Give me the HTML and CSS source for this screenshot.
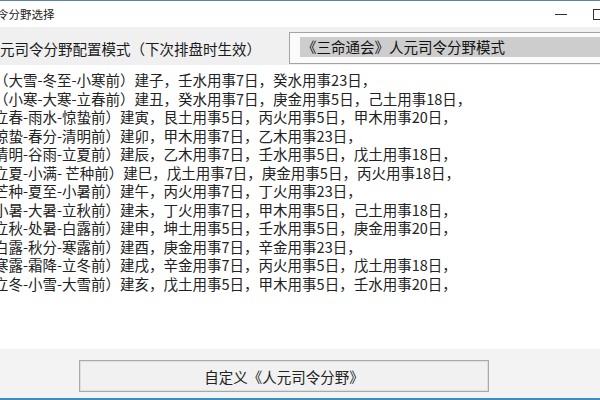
FILE: index.html
```html
<!DOCTYPE html>
<html lang="zh">
<head>
<meta charset="utf-8">
<title>人元司令分野选择</title>
<link rel="stylesheet" href="styles.css">
</head>
<body>
<div class="window">
  <div class="titlebar">
    <span class="title">令分野选择</span>
    <span class="tb-min"></span>
    <span class="tb-max"></span>
  </div>
  <div class="toolbar">
    <span class="mode-label">元司令分野配置模式（下次排盘时生效）</span>
    <div class="combo">
      <div class="combo-sel">《三命通会》人元司令分野模式</div>
    </div>
  </div>
  <div class="list">
    <div class="line">（大雪-冬至-小寒前）建子，壬水用事7日，癸水用事23日，</div>
    <div class="line">（小寒-大寒-立春前）建丑，癸水用事7日，庚金用事5日，己土用事18日，</div>
    <div class="line">立春-雨水-惊蛰前）建寅，艮土用事5日，丙火用事5日，甲木用事20日，</div>
    <div class="line">惊蛰-春分-清明前）建卯，甲木用事7日，乙木用事23日，</div>
    <div class="line">清明-谷雨-立夏前）建辰，乙木用事7日，壬水用事5日，戊土用事18日，</div>
    <div class="line">立夏-小满- 芒种前）建巳，戊土用事7日，庚金用事5日，丙火用事18日，</div>
    <div class="line">芒种-夏至-小暑前）建午，丙火用事7日，丁火用事23日，</div>
    <div class="line">小暑-大暑-立秋前）建未，丁火用事7日，甲木用事5日，己土用事18日，</div>
    <div class="line">立秋-处暑-白露前）建申，坤土用事5日，壬水用事5日，庚金用事20日，</div>
    <div class="line">白露-秋分-寒露前）建酉，庚金用事7日，辛金用事23日，</div>
    <div class="line">寒露-霜降-立冬前）建戌，辛金用事7日，丙火用事5日，戊土用事18日，</div>
    <div class="line">立冬-小雪-大雪前）建亥，戊土用事5日，甲木用事5日，壬水用事20日，</div>
  </div>
  <div class="footer">
    <button class="custom-btn" type="button">自定义《人元司令分野》</button>
  </div>
</div>
</body>
</html>
```

FILE: styles.css
```css
html, body {
  margin: 0;
  padding: 0;
  width: 600px;
  height: 400px;
  overflow: hidden;
  background: #ffffff;
}

body {
  font-family: "Noto Sans CJK SC", "Noto Sans", sans-serif;
  color: #1e1e1e;
}

.window {
  display: flex;
  flex-direction: column;
  height: 400px;
  box-sizing: border-box;
  border-top: 1px solid #5a86a6;
  border-bottom: 2px solid #3f8dbb;
  overflow: hidden;
}

/* ---- title bar ---- */
.titlebar {
  flex: none;
  height: 26px;
  display: flex;
  align-items: center;
  background: #ffffff;
}

.title {
  flex: 1;
  margin-left: -3px;
  font-size: 11.5px;
  color: #222222;
  white-space: nowrap;
}

.tb-min {
  flex: none;
  width: 12px;
  height: 1px;
  background: #333333;
  margin-right: 26px;
}

.tb-max {
  flex: none;
  width: 9px;
  height: 9px;
  border: 1px solid #333333;
  margin-right: -4px;
}

/* ---- mode selector row ---- */
.toolbar {
  flex: none;
  display: flex;
  align-items: center;
  padding: 5px 0 1px;
  background: #f0f0f0;
  overflow: hidden;
}

.mode-label {
  flex: none;
  width: 289px;
  font-size: 14.5px;
  white-space: nowrap;
  color: #1a1a1a;
}

.combo {
  flex: none;
  width: 330px;
  height: 32px;
  box-sizing: border-box;
  border: 1px solid #a3a3a3;
  background: #fbfbfb;
  padding: 4px 0 0 10px;
}

.combo-sel {
  height: 20px;
  line-height: 20px;
  padding-left: 2px;
  background: #cdcdcd;
  font-size: 14.5px;
  color: #111111;
  white-space: nowrap;
}

/* ---- list ---- */
.list {
  flex: 1;
  background: #ffffff;
  padding-top: 6px;
  font-size: 14.5px;
  line-height: 18.5px;
  overflow: hidden;
}

.line {
  margin-left: -6px;
  white-space: nowrap;
  color: #222222;
}

/* ---- footer ---- */
.footer {
  flex: none;
  height: 49px;
  box-sizing: border-box;
  padding-top: 11px;
  background: #f3f3f3;
  display: flex;
  align-items: flex-start;
}

.custom-btn {
  margin: 0 0 0 79px;
  width: 410px;
  height: 32px;
  padding: 0;
  border: 1px solid #a9a9a9;
  box-shadow: inset 0 0 0 1px #dedede;
  background: #f1f1f1;
  font-family: "Noto Sans CJK SC", "Noto Sans", sans-serif;
  font-size: 14.5px;
  color: #222222;
}
```
